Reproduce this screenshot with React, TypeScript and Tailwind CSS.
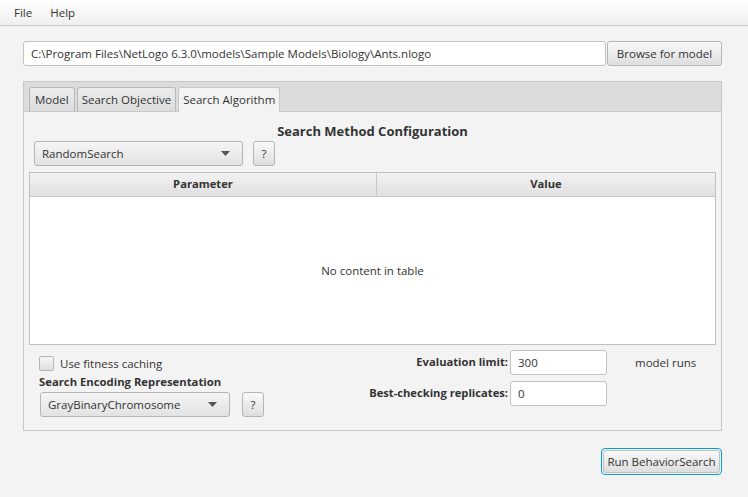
const font = { fontFamily: '"Open Sans", "Noto Sans", sans-serif' }

function Button({ children, className = '' }: { children: React.ReactNode; className?: string }) {
  return (
    <div
      className={`flex items-center justify-center rounded-[3px] border border-[#b5b5b5] bg-gradient-to-b from-[#f9f9f9] to-[#dedede] text-[11.5px] text-[#333] ${className}`}
    >
      {children}
    </div>
  )
}

function Combo({ value, className = '' }: { value: string; className?: string }) {
  return (
    <div
      className={`flex items-center justify-between rounded-[3px] border border-[#b5b5b5] bg-gradient-to-b from-[#f5f5f5] to-[#e2e2e2] pl-[7px] pr-[12px] text-[11.5px] text-[#333] ${className}`}
    >
      <span>{value}</span>
      <svg width="9" height="5" viewBox="0 0 9 5">
        <path d="M0 0 H9 L4.5 5 Z" fill="#555" />
      </svg>
    </div>
  )
}

function TextBox({ value, className = '' }: { value: string; className?: string }) {
  return (
    <div
      className={`flex items-center rounded-[3px] border border-[#c2c2c2] bg-white px-[7px] text-[11.5px] text-[#333] ${className}`}
    >
      {value}
    </div>
  )
}

export default function App() {
  return (
    <div className="flex h-[497px] w-[748px] flex-col bg-[#f3f3f3] text-[#333]" style={font}>
      {/* Menu bar */}
      <div className="flex h-[26px] items-center gap-[18px] border-b border-[#c8c8c8] bg-gradient-to-b from-white to-[#efefef] pl-[14px] text-[11.5px]">
        <span>File</span>
        <span>Help</span>
      </div>

      <div className="flex flex-col pl-[23px] pr-[26px] pt-[15px]">
        {/* Model path */}
        <div className="flex h-[25px]">
          <TextBox value="C:\Program Files\NetLogo 6.3.0\models\Sample Models\Biology\Ants.nlogo" className="flex-1" />
          <Button className="ml-[1px] w-[115px]">Browse for model</Button>
        </div>

        {/* Tab pane */}
        <div className="mt-[15px] flex h-[350px] flex-col border border-[#c8c8c8]">
          <div className="flex h-[30px] items-end gap-[2px] border-b border-[#c8c8c8] bg-[#dcdcdc] pl-[5px]">
            <div className="flex h-[24px] items-center rounded-t-[3px] border border-b-0 border-[#b8b8b8] bg-gradient-to-b from-[#ececec] to-[#dcdcdc] px-[5px] text-[11.5px]">
              Model
            </div>
            <div className="flex h-[24px] items-center rounded-t-[3px] border border-b-0 border-[#b8b8b8] bg-gradient-to-b from-[#ececec] to-[#dcdcdc] px-[4px] text-[11.5px]">
              Search Objective
            </div>
            <div className="-mb-[1px] flex h-[25px] items-center rounded-t-[3px] border border-b-0 border-[#c8c8c8] bg-[#f3f3f3] px-[4px] text-[11.5px]">
              Search Algorithm
            </div>
          </div>

          <div className="flex flex-1 flex-col px-[5px]">
            <div className="mt-[10px] text-center text-[13px] font-bold leading-[18px]">Search Method Configuration</div>
            <div className="ml-[5px] mt-[1px] flex h-[25px] gap-[10px]">
              <Combo value="RandomSearch" className="w-[209px]" />
              <Button className="w-[22px]">?</Button>
            </div>

            {/* Table */}
            <div className="mt-[6px] flex h-[173px] flex-col border border-[#c0c0c0] bg-white">
              <div className="flex h-[24px] border-b border-[#c8c8c8] bg-gradient-to-b from-[#f2f2f2] to-[#e0e0e0] text-[11.2px] font-bold">
                <div className="flex w-[347px] items-center justify-center border-r border-[#c8c8c8]">Parameter</div>
                <div className="flex flex-1 items-center justify-center">Value</div>
              </div>
              <div className="flex flex-1 items-center justify-center text-[11.5px]">No content in table</div>
            </div>

            {/* Options */}
            <div className="mt-[5px] flex">
              <div className="flex w-[330px] flex-col pl-[10px]">
                <div className="mt-[5px] flex items-center gap-[6px] text-[11.5px]">
                  <div className="h-[15px] w-[15px] rounded-[2px] border border-[#b5b5b5] bg-gradient-to-b from-[#f5f5f5] to-[#e0e0e0]" />
                  <span>Use fitness caching</span>
                </div>
                <div className="mt-[1px] text-[11.3px] font-bold leading-[17px]">Search Encoding Representation</div>
                <div className="ml-[1px] mt-[2px] flex h-[25px] gap-[12px]">
                  <Combo value="GrayBinaryChromosome" className="w-[190px]" />
                  <Button className="w-[22px]">?</Button>
                </div>
              </div>
              <div className="flex flex-1 flex-col gap-[6px]">
                <div className="flex h-[25px] items-center">
                  <span className="w-[149px] text-right text-[11.2px] font-bold">Evaluation limit:</span>
                  <TextBox value="300" className="ml-[2px] h-[25px] w-[97px]" />
                  <span className="ml-[28px] text-[11.5px]">model runs</span>
                </div>
                <div className="flex h-[25px] items-center">
                  <span className="w-[149px] text-right text-[11.2px] font-bold">Best-checking replicates:</span>
                  <TextBox value="0" className="ml-[2px] h-[25px] w-[97px]" />
                </div>
              </div>
            </div>
          </div>
        </div>

        <div className="mt-[17px] flex justify-end">
          <div className="rounded-[4px] border border-[#039ed3] p-[1px]">
            <Button className="h-[23px] w-[117px] border-[#c0c0c0]">Run BehaviorSearch</Button>
          </div>
        </div>
      </div>
    </div>
  )
}
